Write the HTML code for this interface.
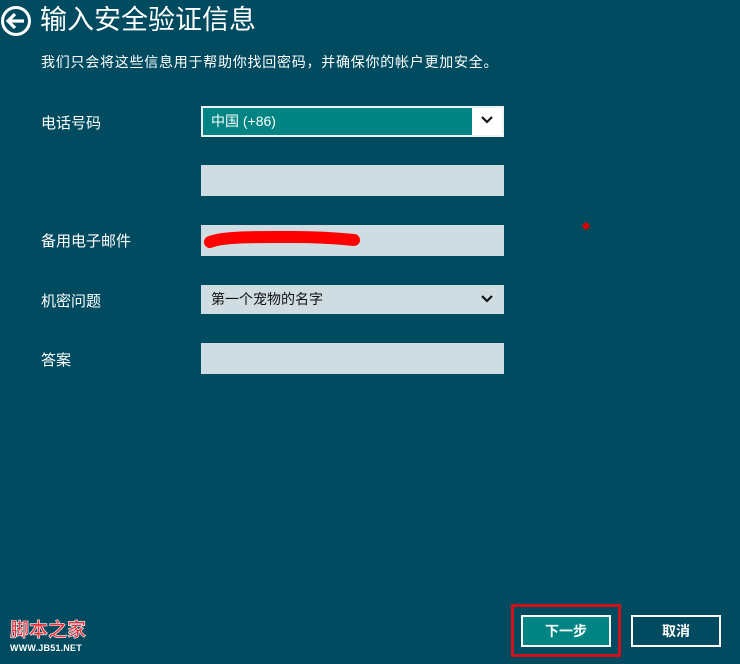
<!DOCTYPE html>
<html><head><meta charset="utf-8"><style>
*{margin:0;padding:0;box-sizing:border-box}
body{width:740px;height:664px;background:#004b5f;position:relative;overflow:hidden;font-family:"Liberation Sans","Noto Sans CJK SC",sans-serif;color:#fff}
.a{position:absolute}
.lbl{position:absolute;left:41px;font-size:15px;color:#fff}
.inp{position:absolute;left:201px;width:303px;background:#cfdde3}
</style></head><body>
<svg class="a" style="left:0;top:5px" width="33" height="33" viewBox="0 0 33 33"><circle cx="16" cy="16" r="13.5" fill="none" stroke="#fff" stroke-width="3"/><path d="M8 16H24M15 9L8 16L15 23" fill="none" stroke="#fff" stroke-width="3.2"/></svg>
<div class="a" style="left:40px;top:1px;font-size:27px;line-height:38px">输入安全验证信息</div>
<div class="a" style="left:41px;top:52px;font-size:14px;line-height:20px;letter-spacing:0.75px">我们只会将这些信息用于帮助你找回密码，并确保你的帐户更加安全。</div>

<div class="lbl" style="top:112px">电话号码</div>
<div class="a" style="left:201px;top:106px;width:303px;height:31px;background:#fff;border:2px solid #e8f4f4"></div>
<div class="a" style="left:203px;top:108px;width:269px;height:27px;background:#008383;font-size:14px;line-height:27px;padding-left:8px">中国 (+86)</div>
<svg class="a" style="left:480px;top:115px" width="14" height="10" viewBox="0 0 14 10"><path d="M2 2L7 7L12 2" fill="none" stroke="#111" stroke-width="2.2"/></svg>

<div class="inp" style="top:165px;height:31px"></div>

<div class="lbl" style="top:230px">备用电子邮件</div>
<div class="inp" style="top:225px;height:31px"></div>
<svg class="a" style="left:204px;top:230px" width="160" height="24"><path d="M6 12C20 6 60 7 90 7C115 7 140 9 150 10" stroke="#f00" stroke-width="12" stroke-linecap="round" fill="none"/></svg>

<div class="lbl" style="top:290px">机密问题</div>
<div class="inp" style="top:285px;height:29px;color:#111;font-size:14px;line-height:29px;padding-left:10px">第一个宠物的名字</div>
<svg class="a" style="left:480px;top:294px" width="14" height="10" viewBox="0 0 14 10"><path d="M2 2L7 7L12 2" fill="none" stroke="#111" stroke-width="2.2"/></svg>

<div class="lbl" style="top:349px">答案</div>
<div class="inp" style="top:343px;height:31px"></div>

<div class="a" style="left:583px;top:223px;width:6px;height:6px;background:#d00;transform:rotate(45deg)"></div>

<div class="a" style="left:511px;top:604px;width:110px;height:53px;border:3px solid #d0101a"></div>
<div class="a" style="left:521px;top:615px;width:90px;height:32px;background:#008383;border:2px solid #fff;text-align:center;font-size:14px;font-weight:bold;line-height:28px">下一步</div>
<div class="a" style="left:631px;top:615px;width:90px;height:32px;border:2px solid #fff;text-align:center;font-size:14px;font-weight:bold;line-height:28px">取消</div>

<div class="a" style="left:10px;top:620px;font-size:19px;color:#e8303a;line-height:22px;-webkit-text-stroke:0.6px #fff;font-weight:bold">脚本之家</div>
<div class="a" style="left:10px;top:643px;font-size:9px;color:#fff;line-height:10px;font-weight:bold;letter-spacing:0.2px">WWW.JB51.NET</div>
</body></html>
